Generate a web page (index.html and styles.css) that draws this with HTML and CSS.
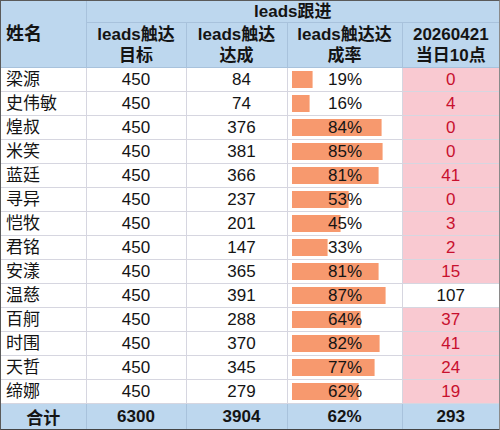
FILE: index.html
```html
<!DOCTYPE html>
<html>
<head>
  <meta charset="utf-8">
  <title>leads跟进</title>
  <link rel="stylesheet" href="styles.css">
</head>
<body>
<div class="sheet">
  <table class="leads">
    <colgroup>
      <col class="c-name">
      <col class="c-goal">
      <col class="c-done">
      <col class="c-rate">
      <col class="c-today">
    </colgroup>
    <thead>
      <tr class="h1">
        <th rowspan="2" class="name-h">姓名</th>
        <th colspan="4">leads跟进</th>
      </tr>
      <tr class="h2">
        <th>leads触达<br>目标</th>
        <th>leads触达<br>达成</th>
        <th>leads触达达<br>成率</th>
        <th>20260421<br>当日10点</th>
      </tr>
    </thead>
    <tbody>
      <tr><td class="name">梁源</td><td>450</td><td class="done">84</td><td class="rate"><div class="cell"><i class="bar" style="width:19%"></i><span>19%</span></div></td><td class="today hot">0</td></tr>
      <tr><td class="name">史伟敏</td><td>450</td><td class="done">74</td><td class="rate"><div class="cell"><i class="bar" style="width:16%"></i><span>16%</span></div></td><td class="today hot">4</td></tr>
      <tr><td class="name">煌叔</td><td>450</td><td class="done">376</td><td class="rate"><div class="cell"><i class="bar" style="width:84%"></i><span>84%</span></div></td><td class="today hot">0</td></tr>
      <tr><td class="name">米笑</td><td>450</td><td class="done">381</td><td class="rate"><div class="cell"><i class="bar" style="width:85%"></i><span>85%</span></div></td><td class="today hot">0</td></tr>
      <tr><td class="name">蓝廷</td><td>450</td><td class="done">366</td><td class="rate"><div class="cell"><i class="bar" style="width:81%"></i><span>81%</span></div></td><td class="today hot">41</td></tr>
      <tr><td class="name">寻异</td><td>450</td><td class="done">237</td><td class="rate"><div class="cell"><i class="bar" style="width:53%"></i><span>53%</span></div></td><td class="today hot">0</td></tr>
      <tr><td class="name">恺牧</td><td>450</td><td class="done">201</td><td class="rate"><div class="cell"><i class="bar" style="width:45%"></i><span>45%</span></div></td><td class="today hot">3</td></tr>
      <tr><td class="name">君铭</td><td>450</td><td class="done">147</td><td class="rate"><div class="cell"><i class="bar" style="width:33%"></i><span>33%</span></div></td><td class="today hot">2</td></tr>
      <tr><td class="name">安漾</td><td>450</td><td class="done">365</td><td class="rate"><div class="cell"><i class="bar" style="width:81%"></i><span>81%</span></div></td><td class="today hot">15</td></tr>
      <tr><td class="name">温慈</td><td>450</td><td class="done">391</td><td class="rate"><div class="cell"><i class="bar" style="width:87%"></i><span>87%</span></div></td><td class="today">107</td></tr>
      <tr><td class="name">百舸</td><td>450</td><td class="done">288</td><td class="rate"><div class="cell"><i class="bar" style="width:64%"></i><span>64%</span></div></td><td class="today hot">37</td></tr>
      <tr><td class="name">时围</td><td>450</td><td class="done">370</td><td class="rate"><div class="cell"><i class="bar" style="width:82%"></i><span>82%</span></div></td><td class="today hot">41</td></tr>
      <tr><td class="name">天哲</td><td>450</td><td class="done">345</td><td class="rate"><div class="cell"><i class="bar" style="width:77%"></i><span>77%</span></div></td><td class="today hot">24</td></tr>
      <tr><td class="name">缔娜</td><td>450</td><td class="done">279</td><td class="rate"><div class="cell"><i class="bar" style="width:62%"></i><span>62%</span></div></td><td class="today hot">19</td></tr>
    </tbody>
    <tfoot>
      <tr><td>合计</td><td>6300</td><td class="done">3904</td><td>62%</td><td>293</td></tr>
    </tfoot>
  </table>
</div>
</body>
</html>
```

FILE: styles.css
```css
body {
  margin: 0;
  background: #fff;
}

.sheet {
  width: 500px;
  box-sizing: border-box;
  border-top: 1px solid #5a5a5a;
  border-left: 1px solid #5a5a5a;
  border-right: 1px solid #8a8a8a;
  border-bottom: 2px solid #444;
}

.leads {
  width: 100%;
  border-collapse: collapse;
  table-layout: fixed;
  font-family: "Liberation Sans", "Noto Sans CJK SC", sans-serif;
  font-size: 17px;
  color: #141414;
}

.c-name { width: 85px; }
.c-goal { width: 100px; }
.c-done { width: 101px; }
.c-rate { width: 115px; }
.c-today { width: 97px; }

.leads th,
.leads td {
  padding: 0;
  text-align: center;
  border: 1px solid #d6d6e0;
}

/* header */
.leads thead th {
  background: #bdd7ee;
  font-weight: bold;
  border-color: #a8c2dc;
  line-height: 21px;
}
.leads tr.h1 th {
  height: 21px;
  border-top: none;
}
.leads tr.h2 th {
  height: 44px;
}
.leads th.name-h {
  text-align: left;
  padding-left: 5px;
  font-size: 18px;
  border-left: none;
}
.leads thead th:last-child {
  border-right: none;
}

/* body */
.leads tbody td {
  height: 23px;
  line-height: 20px;
}
.leads td.name {
  text-align: left;
  padding-left: 5px;
}
.leads tr td:first-child {
  border-left: none;
}
.leads tr td:last-child {
  border-right: none;
}
.leads td.done {
  padding-left: 10px;
}

.rate .cell {
  display: grid;
  align-items: center;
  height: 23px;
  padding: 0 3px 0 4px;
}
.rate .bar,
.rate span {
  grid-area: 1 / 1;
}
.rate .bar {
  display: block;
  height: 17px;
  background: #f7996e;
  box-shadow: 1px 0 0 #fbc3a8;
}
.rate span {
  text-align: center;
  position: relative;
}

.today.hot {
  background: #f9c9d1;
  color: #c8102e;
}

/* total */
.leads tfoot td {
  background: #bdd7ee;
  font-weight: bold;
  height: 23px;
  border-color: #a8c2dc;
  border-bottom: none;
}
```
